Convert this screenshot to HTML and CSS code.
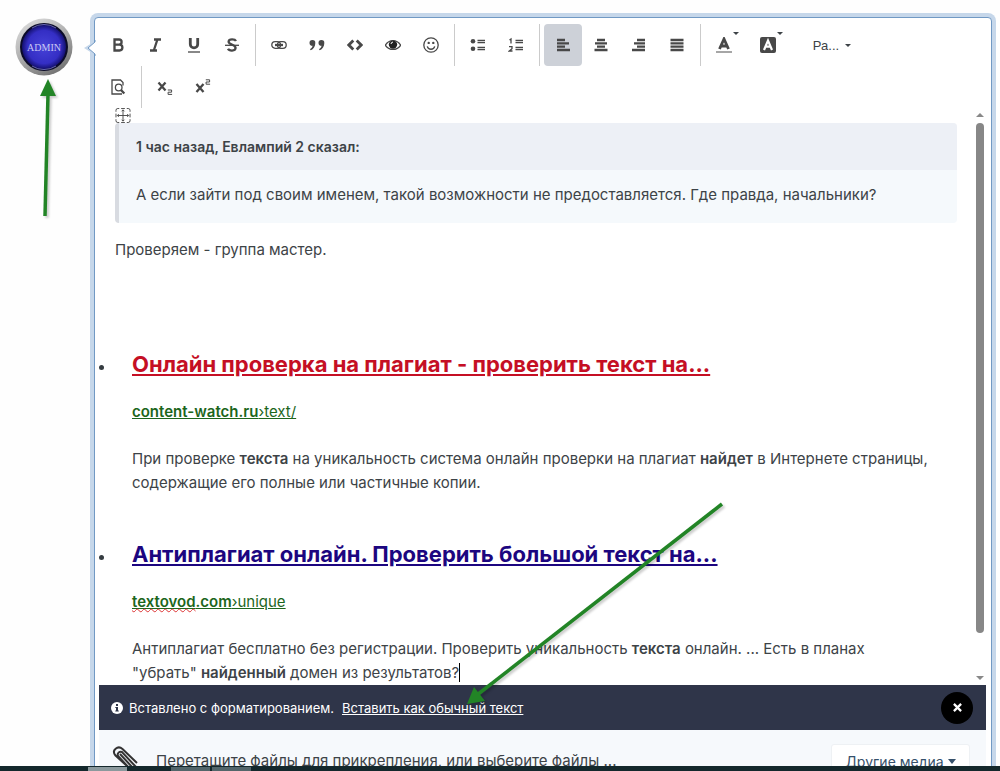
FILE: index.html
```html
<!DOCTYPE html>
<html lang="ru">
<head>
    <meta charset="UTF-8">
    <meta name="viewport" content="width=device-width, initial-scale=1.0">
    <title>Ответ в тему</title>
    <link rel="stylesheet" href="styles.css">
</head>
<body>

<div class="page">
    <a href="#" class="avatar" aria-label="ADMIN">
        <svg viewBox="0 0 58 58">
            <defs>
                <linearGradient id="rim" x1="0" y1="0" x2="0.6" y2="1">
                    <stop offset="0" stop-color="#e4e4e4"/>
                    <stop offset="0.5" stop-color="#b4b4b4"/>
                    <stop offset="1" stop-color="#777"/>
                </linearGradient>
                <radialGradient id="blue" cx="0.5" cy="0.5" r="0.5">
                    <stop offset="0" stop-color="#4642d8"/>
                    <stop offset="0.75" stop-color="#342ec4"/>
                    <stop offset="1" stop-color="#141070"/>
                </radialGradient>
            </defs>
            <circle cx="29" cy="29" r="28.500" fill="url(#rim)"/>
            <circle cx="29" cy="29" r="24" fill="#0b0b28"/>
            <circle cx="29" cy="29" r="22" fill="url(#blue)"/>
            <path d="M17 10a22 22 0 0 1 24 0M17 48a22 22 0 0 0 24 0" fill="none" stroke="#8d8be8" stroke-width="0.700"/>
            <text x="29" y="33" text-anchor="middle">ADMIN</text>
        </svg>
    </a>

    <form class="composer">
        <svg class="pointer" viewBox="0 0 14 24">
            <path d="M10 2v5L2 12l8 5v5z" fill="#c6d7ea"/>
            <path d="M14 5L6 12l8 7z" fill="#fff"/>
            <path d="M13 4v2L6 12l7 6v2" fill="none" stroke="#7199c4"/>
        </svg>

        <div class="toolbar">
            <div class="group">
                <button type="button" title="Жирный"><svg viewBox="0 0 16 16"><path d="M4.500 2.500H9a2.500 2.500 0 0 1 0 5.200H4.500zM4.500 7.700H9.500a2.900 2.900 0 0 1 0 5.800H4.500z" class="line bold"/></svg></button>
                <button type="button" title="Курсив"><svg viewBox="0 0 16 16"><path d="M6 2.500h7M2 13.500h7M9.400 2.500L5.800 13.500" class="line bold"/></svg></button>
                <button type="button" title="Подчеркнутый"><svg viewBox="0 0 16 16"><path d="M4.300 1v6.200a3.700 3.700 0 0 0 7.400 0V1" class="line heavy"/><path d="M2 15h12" class="line"/></svg></button>
                <button type="button" title="Зачеркнутый"><svg viewBox="0 0 16 16"><path d="M12 4C11 2 5 1.500 4.600 4.600 4.500 8 11.500 7 11.600 11 11.300 14.500 5 14 4 11.800" class="line bold"/><path d="M1 8.300h14" class="line"/></svg></button>
            </div>
            <div class="group">
                <button type="button" title="Ссылка"><svg viewBox="0 0 16 16"><rect x="0.800" y="4.700" width="8.700" height="6.600" rx="3.300" class="line"/><rect x="6.500" y="4.700" width="8.700" height="6.600" rx="3.300" class="line"/><path d="M4 8h8" class="line bold"/></svg></button>
                <button type="button" title="Цитата"><svg viewBox="0 0 16 16"><path d="M3.300 3a3 3 0 0 1 3 3.300c0 3.200-1.800 5.900-4.600 7l-.7-1.100C2.800 11.100 3.500 9.900 3.500 8.800A2.900 2.900 0 0 1 3.300 3zM12.300 3a3 3 0 0 1 3 3.300c0 3.200-1.800 5.900-4.600 7l-.7-1.100c1.800-1.100 2.500-2.300 2.500-3.400a2.900 2.900 0 0 1-.2-5.800z"/></svg></button>
                <button type="button" title="Код"><svg viewBox="0 0 16 16"><path d="M6.300 3.500L1.800 8l4.500 4.500M9.700 3.500L14.200 8l-4.500 4.500" class="line heavy"/></svg></button>
                <button type="button" title="Скрытый текст"><svg viewBox="0 0 16 16"><path d="M.3 8.200C4 2 12 2 15.700 8.200 12 13.800 4 13.800.3 8.200z" class="line"/><circle cx="8" cy="7.600" r="4.200" class="pupil"/><path d="M6 7a2.200 2.200 0 0 1 2-2" stroke="#fff" fill="none"/></svg></button>
                <button type="button" title="Смайлы"><svg viewBox="0 0 16 16"><circle cx="8" cy="8" r="7.200" class="line"/><path d="M4.300 9.300a3.800 3.800 0 0 0 7.400 0" class="line"/><circle cx="5.700" cy="5.900" r="1.200"/><circle cx="10.300" cy="5.900" r="1.200"/></svg></button>
            </div>
            <div class="group">
                <button type="button" title="Маркированный список"><svg viewBox="0 0 16 16"><circle cx="3" cy="4.300" r="2.300"/><circle cx="3" cy="11.700" r="2.300"/><path d="M7.500 3.300h7.500M7.500 5.500h7.500M7.500 10.500h7.500M7.500 12.700h7.500" class="line"/></svg></button>
                <button type="button" title="Нумерованный список"><svg viewBox="0 0 16 16"><path d="M1.500 3L3 2v4.500M1 9.700h3v2L1.300 14H4.500M7.500 3.300h7.500M7.500 5.500h7.500M7.500 10.500h7.500M7.500 12.700h7.500" class="line"/></svg></button>
            </div>
            <div class="group">
                <button type="button" title="По левому краю" class="active"><svg viewBox="0 0 16 16"><path d="M2 3h8M2 6.300h12M2 9.600h8M2 13h13" class="line bold"/></svg></button>
                <button type="button" title="По центру"><svg viewBox="0 0 16 16"><path d="M4 3h8M2 6.300h12M4 9.600h8M1.500 13h13" class="line bold"/></svg></button>
                <button type="button" title="По правому краю"><svg viewBox="0 0 16 16"><path d="M6 3h8M3 6.300h11M6 9.600h8M1 13h13" class="line bold"/></svg></button>
                <button type="button" title="По ширине"><svg viewBox="0 0 16 16"><path d="M1.500 3h13M1.500 6.300h13M1.500 9.600h13M1.500 13h13" class="line bold"/></svg></button>
            </div>
            <div class="group">
                <button type="button" title="Цвет текста" class="color"><svg viewBox="0 0 16 16"><path d="M3.500 12L8 2l4.500 10M5 9h6" class="line heavy"/><path d="M0 15h16" stroke="#888" stroke-width="1.500"/></svg><i class="caret"></i></button>
                <button type="button" title="Цвет фона" class="color"><svg viewBox="0 0 16 16"><rect x="0" y="0" width="16" height="16" rx="2"/><path d="M4 13L8 3.500 12 13M5.500 9.700h5" stroke="#fff" stroke-width="2.200" fill="none"/></svg><i class="caret"></i></button>
                <button type="button" title="Размер" class="size">Ра...<i class="caret"></i></button>
            </div>
            <div class="group">
                <button type="button" title="Предпросмотр"><svg viewBox="0 0 16 16"><path d="M13 6.500V3.500L10.500 1H2v14h10" class="line"/><circle cx="8.700" cy="8.500" r="3.300" class="line"/><path d="M11 11l3.300 3.500" class="line bold"/></svg></button>
            </div>
            <div class="group">
                <button type="button" title="Нижний индекс"><svg viewBox="0 0 16 16"><path d="M1.500 3.500l7 8M8.500 3.500l-7 8" class="line bold"/><path d="M10.800 11h3.800v2.200h-3.500v2.200h4" class="line thin"/></svg></button>
                <button type="button" title="Верхний индекс"><svg viewBox="0 0 16 16"><path d="M1.500 5l7 8M8.500 5l-7 8" class="line bold"/><path d="M10.800 .8h3.800V3h-3.500v2.200h4" class="line thin"/></svg></button>
            </div>
        </div>

        <div class="scroller">
            <div class="editor" contenteditable="true" spellcheck="false">
                <svg class="handle" viewBox="0 0 16 16"><path d="M.5 4V2.500a2 2 0 0 1 2-2H4M6 .5h4M12 .5h1.500a2 2 0 0 1 2 2V4M15.500 6v4M15.500 12v1.500a2 2 0 0 1-2 2H12M10 15.500H6M4 15.500H2.500a2 2 0 0 1-2-2V12M.5 10V6M8 2v12M2 8h12M6.500 3.500L8 2l1.500 1.500M6.500 12.500L8 14l1.500-1.500M3.500 6.500L2 8l1.500 1.500M12.500 6.500L14 8l-1.500 1.500" class="line thin"/></svg>
                <blockquote class="quote">
                    <div class="citation">1 час назад, Евлампий 2 сказал:</div>
                    <p>А если зайти под своим именем, такой возможности не предоставляется. Где правда, начальники?</p>
                </blockquote>
                <p class="message">Проверяем - группа мастер.</p>
                <ul class="results">
                    <li>
                        <div>
                            <h2><a href="#" class="hot">Онлайн проверка на плагиат - проверить текст на...</a></h2>
                            <p class="site"><a href="#"><b>content-watch.ru</b>›text/</a></p>
                            <p>При проверке <b>текста</b> на уникальность система онлайн проверки на плагиат <b>найдет</b> в Интернете страницы, содержащие его полные или частичные копии.</p>
                        </div>
                    </li>
                    <li>
                        <div>
                            <h2><a href="#">Антиплагиат онлайн. Проверить большой текст на...</a></h2>
                            <p class="site"><a href="#"><b><span class="typo">textovod</span>.com</b>›unique</a></p>
                            <p>Антиплагиат бесплатно без регистрации. Проверить уникальность <b>текста</b> онлайн. ... Есть в планах "убрать" <b>найденный</b> домен из результатов?<span class="cursor"></span></p>
                        </div>
                    </li>
                </ul>
            </div>
            <div class="scrollbar">
                <i class="up"></i>
                <div class="thumb"></div>
                <i class="down"></i>
            </div>
        </div>

        <div class="notice">
            <svg viewBox="0 0 12 12"><circle cx="6" cy="6" r="6" fill="#fff"/><path d="M5 2h2v2H5zM4.300 5H7v3.600h.8v1H4.300v-1H5V6h-.7z" fill="#2f3549"/></svg>
            <span>Вставлено с форматированием.</span>
            <a href="#">Вставить как обычный текст</a>
            <button type="button" aria-label="Закрыть"><svg viewBox="0 0 10 10"><path d="M1 1l8 8M9 1L1 9" stroke="#fff" stroke-width="2.500"/></svg></button>
        </div>

        <div class="upload">
            <svg viewBox="0 0 26 30"><path d="M20 25L6 10a3 3 0 0 1 4-4l14 15M15 20L3.500 9.500C-1 4 6 -1 10.500 3L25 17M8 8l13 14" fill="none" stroke="#333" stroke-width="2"/></svg>
            <span>Перетащите файлы для прикрепления, или <a href="#">выберите файлы ...</a></span>
            <button type="button">Другие медиа<i class="caret"></i></button>
        </div>
    </form>

    <svg class="arrow arrow-up" viewBox="0 0 20 140"><path d="M8 138l3-122" stroke="#228426" stroke-width="3.500"/><path d="M11 1l8 17H3z" fill="#228426"/></svg>
    <svg class="arrow arrow-down" viewBox="0 0 260 206"><path d="M257 2L12 193" stroke="#228426" stroke-width="3.500"/><path d="M2 202l7-17 11 14z" fill="#228426"/></svg>
</div>

<div class="taskbar"><i></i><i></i><i></i></div>

</body>
</html>
```

FILE: styles.css
```css
* {
    box-sizing: border-box;
}
body {
    margin: 0;
    height: 100vh;
    overflow: hidden;
    background: #fefefe;
    color: #3d4347;
    font-family: Inter, "Liberation Sans", sans-serif;
    font-size: 15px;
    line-height: 24px;
}
p, h2, ul, blockquote {
    margin: 0;
    padding: 0;
}
b {
    font-weight: 600;
}
button {
    border: 0;
    padding: 0;
    background: none;
    font-family: inherit;
    color: inherit;
    cursor: pointer;
}
.page {
    position: relative;
    display: flex;
    align-items: flex-start;
    gap: 21px;
    padding: 17px 8px 0 15px;
}
.avatar {
    flex: none;
    width: 58px;
    height: 58px;
    margin-top: 1px;
}
.avatar svg {
    display: block;
}
.avatar text {
    font-family: "Liberation Serif", serif;
    font-size: 10px;
    fill: #c9c9f4;
}

/* composer box */
.composer {
    position: relative;
    flex: 1;
    min-width: 0;
    padding: 6px 5px 0 4px;
    background: #fff;
    border: 1px solid #7199c4;
    border-radius: 4px;
    box-shadow: 0 0 0 4px #c6d7ea;
}
.pointer {
    position: absolute;
    left: -13px;
    top: 18px;
    width: 14px;
    height: 24px;
}

/* toolbar */
.toolbar {
    display: flex;
    flex-wrap: wrap;
    padding-right: 80px;
}
.group {
    display: flex;
    height: 42px;
}
.group + .group::before {
    content: "";
    width: 1px;
    margin: 0 4px;
    background: #cbcbcb;
}
.group:nth-child(6)::before {
    display: none;
}
.toolbar button {
    display: flex;
    align-items: center;
    justify-content: center;
    width: 38px;
    height: 42px;
    border-radius: 4px;
}
.toolbar button.active {
    background: #cdd1d8;
}
.toolbar svg {
    width: 16px;
    height: 16px;
    fill: #484848;
}
svg .line {
    fill: none;
    stroke: #484848;
    stroke-width: 1.3;
}
svg .bold {
    stroke-width: 2.3;
}
svg .heavy {
    stroke-width: 2.8;
}
svg .thin {
    stroke-width: 1;
}
svg .pupil {
    fill: #222;
}
.caret {
    border: 3px solid transparent;
    border-top-color: currentColor;
    border-bottom: 0;
}
.toolbar button.color {
    justify-content: flex-start;
    gap: 1px;
    width: 44px;
    padding-left: 11px;
}
.color .caret {
    margin-bottom: 24px;
}
.toolbar button.size {
    gap: 6px;
    width: 78px;
    font-family: "Liberation Sans", sans-serif;
    font-size: 13px;
}

/* text area */
.scroller {
    display: flex;
}
.editor {
    flex: 1;
    min-width: 0;
    padding: 0 17px 0 0;
    outline: 0;
}
.handle {
    display: block;
    width: 16px;
    height: 15px;
    margin-left: 16px;
}
.quote {
    margin-left: 16px;
    border-left: 4px solid #d8dbe1;
    border-radius: 4px;
    background: #f5f9fc;
    overflow: hidden;
}
.citation {
    padding: 12px 17px 11px;
    background: #edf0f6;
    font-size: 14px;
    font-weight: 600;
}
.quote p {
    padding: 13px 17px 16px;
}
.message {
    margin: 15px 0 90px 16px;
}
.results {
    padding-right: 26px;
    list-style: none;
}
.results li {
    display: flex;
    gap: 28px;
}
.results li::before {
    content: "";
    flex: none;
    width: 5px;
    height: 5px;
    margin-top: 13px;
    border-radius: 50%;
    background: #353c41;
}
.results li + li {
    margin-top: 47px;
}
.results h2 {
    font-size: 22px;
    font-weight: 700;
    line-height: 24px;
}
.results h2 a {
    color: #1c0680;
}
.results h2 .hot {
    color: #c50f24;
}
.results .site {
    margin: 24px 0 23px;
}
.site a {
    color: #1c661c;
}
.typo {
    text-decoration: underline wavy #d33 1px;
}
.cursor {
    border-right: 1px solid #000;
}

.scrollbar {
    display: flex;
    flex-direction: column;
    align-items: center;
    width: 12px;
    padding: 5px 0;
}
.scrollbar .up {
    border: 4px solid transparent;
    border-bottom-color: #888;
    border-top: 0;
    margin: 0 0 6px;
}
.scrollbar .thumb {
    flex: 1;
    width: 8px;
    margin-bottom: 43px;
    border-radius: 4px;
    background: #878787;
}
.scrollbar .down {
    border: 4px solid transparent;
    border-top-color: #888;
    border-bottom: 0;
}

/* paste notice */
.notice {
    display: flex;
    align-items: center;
    height: 45px;
    padding: 0 13px 0 12px;
    background: #2f3549;
    color: #fff;
    font-size: 13px;
}
.notice > svg {
    width: 12px;
    height: 12px;
    margin-right: 6px;
}
.notice a {
    margin-left: 8px;
    color: #fff;
}
.notice button {
    display: flex;
    align-items: center;
    justify-content: center;
    width: 32px;
    height: 32px;
    margin-left: auto;
    border-radius: 50%;
    background: #000;
}
.notice button svg {
    width: 9px;
    height: 9px;
}

/* attachments */
.upload {
    display: flex;
    align-items: center;
    height: 62px;
    padding: 0 16px 0 13px;
    background: #f6f9fc;
}
.upload > svg {
    width: 26px;
    height: 30px;
    margin-right: 18px;
}
.upload a {
    color: inherit;
    text-decoration: none;
}
.upload button {
    display: flex;
    align-items: center;
    justify-content: center;
    gap: 4px;
    width: 139px;
    height: 34px;
    margin-left: auto;
    border: 1px solid #eef1f4;
    border-radius: 3px;
    background: #fff;
    color: #35506b;
    font-size: 14px;
}
.upload .caret {
    border-width: 5px 4px 0;
}

/* arrows over the page */
.arrow {
    position: absolute;
    pointer-events: none;
    filter: drop-shadow(2px 2px 1px rgba(0, 0, 0, 0.2));
}
.arrow-up {
    left: 37px;
    top: 78px;
    width: 20px;
    height: 140px;
}
.arrow-down {
    left: 465px;
    top: 502px;
    width: 260px;
    height: 206px;
}

.taskbar {
    position: fixed;
    left: 0;
    right: 0;
    bottom: 0;
    display: flex;
    gap: 2px;
    height: 5px;
    padding: 1px 0 0 88px;
    background: #14282c;
}
.taskbar i {
    width: 39px;
    background: #52656a;
}
.taskbar i:first-child {
    margin-right: 42px;
    background: #8b999d;
}
```
